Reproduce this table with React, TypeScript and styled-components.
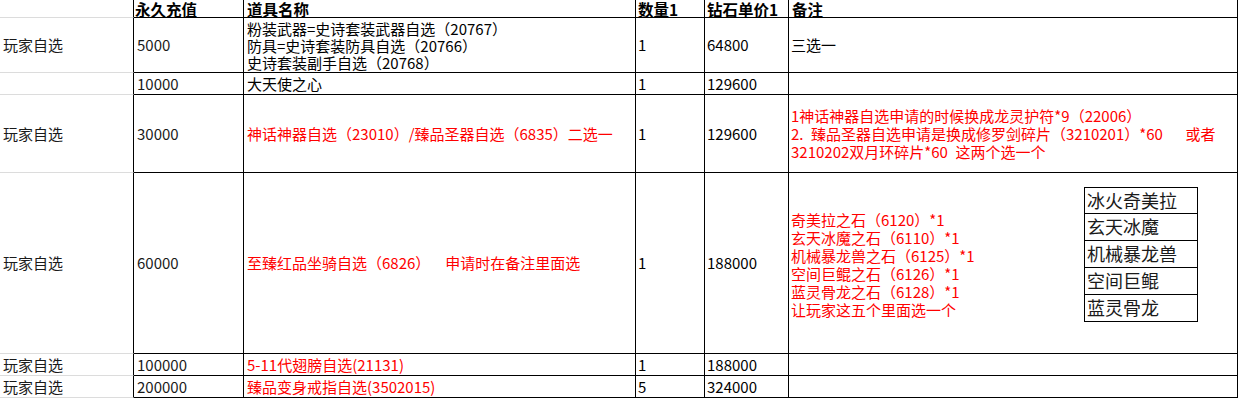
import React from 'react'
import styled, { createGlobalStyle } from 'styled-components'

const GlobalStyle = createGlobalStyle`
  html, body {
    margin: 0;
    padding: 0;
    background: #fff;
  }
  body {
    font-family: "Noto Sans CJK SC", "Liberation Sans", sans-serif;
    color: #000;
  }
`

interface Row {
  who: string
  amount: string
  item: string[]
  itemRed?: boolean
  qty: string
  price: string
  note?: string[]
  picks?: string[]
}

// the sheet's song-style font has half-em spaces, so plain spaces become en spaces
const wide = (s: string): string => s.replace(/ /g, '\u2002')

const headers = ['', '永久充值', '道具名称', '数量1', '钻石单价1', '备注']

const rows: Row[] = [
  {
    who: '玩家自选',
    amount: '5000',
    item: ['粉装武器=史诗套装武器自选（20767）', '防具=史诗套装防具自选（20766）', '史诗套装副手自选（20768）'],
    qty: '1',
    price: '64800',
    note: ['三选一']
  },
  { who: '', amount: '10000', item: ['大天使之心'], qty: '1', price: '129600' },
  {
    who: '玩家自选',
    amount: '30000',
    item: ['神话神器自选（23010）/臻品圣器自选（6835）二选一'],
    itemRed: true,
    qty: '1',
    price: '129600',
    note: [
      '1神话神器自选申请的时候换成龙灵护符*9（22006）',
      '2. 臻品圣器自选申请是换成修罗剑碎片（3210201）*60   或者',
      '3210202双月环碎片*60 这两个选一个'
    ]
  },
  {
    who: '玩家自选',
    amount: '60000',
    item: ['至臻红品坐骑自选（6826）  申请时在备注里面选'],
    itemRed: true,
    qty: '1',
    price: '188000',
    note: [
      '奇美拉之石（6120）*1',
      '玄天冰魔之石（6110）*1',
      '机械暴龙兽之石（6125）*1',
      '空间巨鲲之石（6126）*1',
      '蓝灵骨龙之石（6128）*1',
      '让玩家这五个里面选一个'
    ],
    picks: ['冰火奇美拉', '玄天冰魔', '机械暴龙兽', '空间巨鲲', '蓝灵骨龙']
  },
  { who: '玩家自选', amount: '100000', item: ['5-11代翅膀自选(21131)'], itemRed: true, qty: '1', price: '188000' },
  { who: '玩家自选', amount: '200000', item: ['臻品变身戒指自选(3502015)'], itemRed: true, qty: '5', price: '324000' }
]

const App = (): React.ReactElement => {
  return (
    <>
      <GlobalStyle />
      <Sheet>
        {headers.map((h, i) => (
          <HeadCell key={i} $side={i === 0} $pad={i === 1 ? 1 : i === 2 || i === 5 ? 3 : 2}>
            {h}
          </HeadCell>
        ))}
        {rows.map((r, ri) => (
          <React.Fragment key={ri}>
            <Cell $side $pad={3} $kind='sans'>{r.who}</Cell>
            <Cell $pad={3} $kind='sans'>{r.amount}</Cell>
            <Cell $pad={3} $red={r.itemRed} $tight={r.item.length > 1}>
              <Lines>
                {r.item.map((l, li) => <Line key={li}>{wide(l)}</Line>)}
              </Lines>
            </Cell>
            <Cell>{r.qty}</Cell>
            <Cell>{r.price}</Cell>
            <Cell $red={ri > 0}>
              {r.note && (
                <Lines $shift={r.picks ? 3 : 0}>
                  {r.note.map((l, li) => <Line key={li}>{wide(l)}</Line>)}
                </Lines>
              )}
              {r.picks && (
                <PickBox>
                  {r.picks.map((p, pi) => <PickItem key={pi}>{p}</PickItem>)}
                </PickBox>
              )}
            </Cell>
          </React.Fragment>
        ))}
      </Sheet>
    </>
  )
}

export default App

const Sheet = styled.div`
  display: grid;
  grid-template-columns: 134px 110px 392px 69px 84px 449px;
  grid-template-rows: 18px 55px 22px 78px 181px 22px 22px;
  width: 1238px;
`

const Cell = styled.div<{ $side?: boolean; $red?: boolean; $pad?: number; $kind?: 'sans' | 'song'; $tight?: boolean }>`
  box-sizing: border-box;
  display: flex;
  align-items: center;
  min-width: 0;
  overflow: hidden;
  padding-left: ${p => p.$pad ?? 2}px;
  border-right: 1px solid #000;
  border-bottom: 1px solid ${p => (p.$side ? '#dcdcdc' : '#000')};
  color: ${p => (p.$red ? '#ff0000' : p.$kind === 'sans' ? '#1a1a1a' : '#000')};
  font-size: 15px;
  line-height: ${p => (p.$tight ? '17px' : '18px')};
  white-space: pre;
`

const HeadCell = styled.div<{ $side?: boolean; $pad?: number }>`
  box-sizing: border-box;
  display: flex;
  align-items: center;
  padding-left: ${p => p.$pad ?? 2}px;
  border-right: 1px solid #000;
  border-bottom: 1px solid ${p => (p.$side ? '#dcdcdc' : '#000')};
  font-size: 15.5px;
  font-weight: 700;
  line-height: 16px;
  white-space: nowrap;
`

const Lines = styled.div<{ $shift?: number }>`
  display: flex;
  flex-direction: column;
  margin-top: ${p => p.$shift ?? 0}px;
`

const Line = styled.div`
  white-space: pre;
`

const PickBox = styled.div`
  display: flex;
  flex-direction: column;
  width: 114px;
  margin-left: auto;
  margin-right: 39px;
  margin-bottom: 17px;
  border: 1px solid #000;
  box-sizing: border-box;
  color: #1a1a1a;
`

const PickItem = styled.div`
  height: 25px;
  padding-left: 2px;
  font-size: 18px;
  line-height: 25px;
  & + & {
    height: 26px;
    border-top: 1px solid #000;
  }
`
